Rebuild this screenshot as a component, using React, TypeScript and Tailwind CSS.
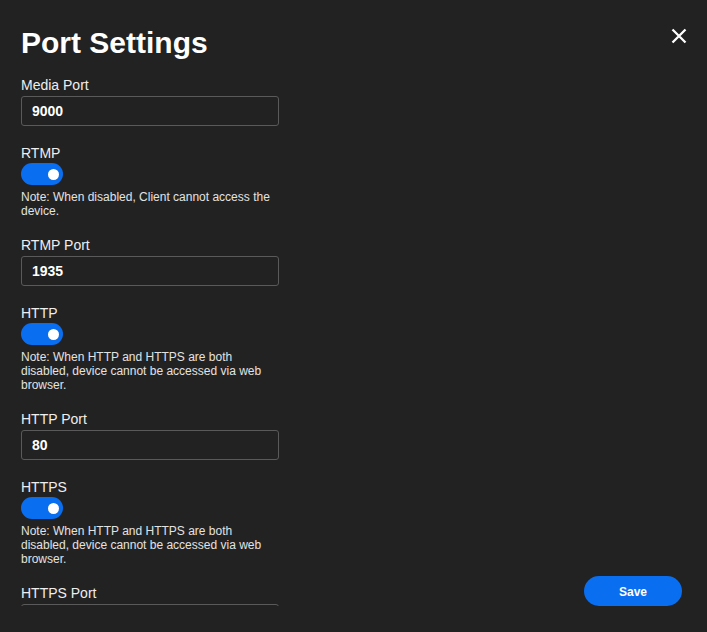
import { useState } from 'react';

interface ToggleProps {
  checked: boolean;
  onChange: (v: boolean) => void;
}

function Toggle({ checked, onChange }: ToggleProps) {
  return (
    <button
      type="button"
      role="switch"
      aria-checked={checked}
      onClick={() => onChange(!checked)}
      className={`mt-[2px] flex h-[22px] w-[42px] items-center rounded-full px-[4px] ${
        checked ? 'justify-end bg-[#0a6ef0]' : 'justify-start bg-[#555555]'
      }`}
    >
      <span className="block h-[11px] w-[11px] rounded-full bg-white" />
    </button>
  );
}

function PortField({ label, value }: { label: string; value: string }) {
  return (
    <div className="flex flex-col">
      <label className="text-[14px] leading-4 text-[#eeeeee]">{label}</label>
      <input
        defaultValue={value}
        className="mt-[3px] h-[30px] w-[258px] rounded-[3px] border border-[#5a5a5a] bg-transparent px-[10px] text-[14px] font-bold text-white outline-none"
      />
    </div>
  );
}

function SwitchField({
  label,
  note,
  checked,
  onChange,
}: {
  label: string;
  note: string;
  checked: boolean;
  onChange: (v: boolean) => void;
}) {
  return (
    <div className="flex flex-col">
      <span className="text-[14px] leading-4 text-[#eeeeee]">{label}</span>
      <Toggle checked={checked} onChange={onChange} />
      <p className="mt-[5px] text-[12px] leading-[14px] text-[#e2e2e2]">{note}</p>
    </div>
  );
}

const bothNote =
  'Note: When HTTP and HTTPS are both disabled, device cannot be accessed via web browser.';

export default function App() {
  const [rtmp, setRtmp] = useState(true);
  const [http, setHttp] = useState(true);
  const [https, setHttps] = useState(true);

  return (
    <div className="relative flex h-[632px] w-[707px] flex-col bg-[#222222] font-['Liberation_Sans',Arial,sans-serif]">
      <h1 className="pl-[21px] pt-[25px] text-[30px] font-bold leading-[36px] text-white">Port Settings</h1>
      <button type="button" aria-label="Close" className="absolute right-[20px] top-[28px] text-white">
        <svg width="16" height="16" viewBox="0 0 16 16" fill="none">
          <path d="M1.5 1.5L14.5 14.5M14.5 1.5L1.5 14.5" stroke="currentColor" strokeWidth="2.3" />
        </svg>
      </button>

      <div className="mt-[16px] flex min-h-0 flex-1 pb-[26px] pl-[21px] pr-[25px]">
        <div className="flex w-[258px] flex-col gap-[19px] overflow-hidden">
          <PortField label="Media Port" value="9000" />
          <SwitchField
            label="RTMP"
            note="Note: When disabled, Client cannot access the device."
            checked={rtmp}
            onChange={setRtmp}
          />
          <PortField label="RTMP Port" value="1935" />
          <SwitchField label="HTTP" note={bothNote} checked={http} onChange={setHttp} />
          <PortField label="HTTP Port" value="80" />
          <SwitchField label="HTTPS" note={bothNote} checked={https} onChange={setHttps} />
          <PortField label="HTTPS Port" value="443" />
        </div>
        <div className="flex flex-1 items-end justify-end">
          <button
            type="button"
            className="h-[30px] w-[98px] rounded-full bg-[#0a6ef0] pt-px text-[12px] font-bold text-white"
          >
            Save
          </button>
        </div>
      </div>
    </div>
  );
}
